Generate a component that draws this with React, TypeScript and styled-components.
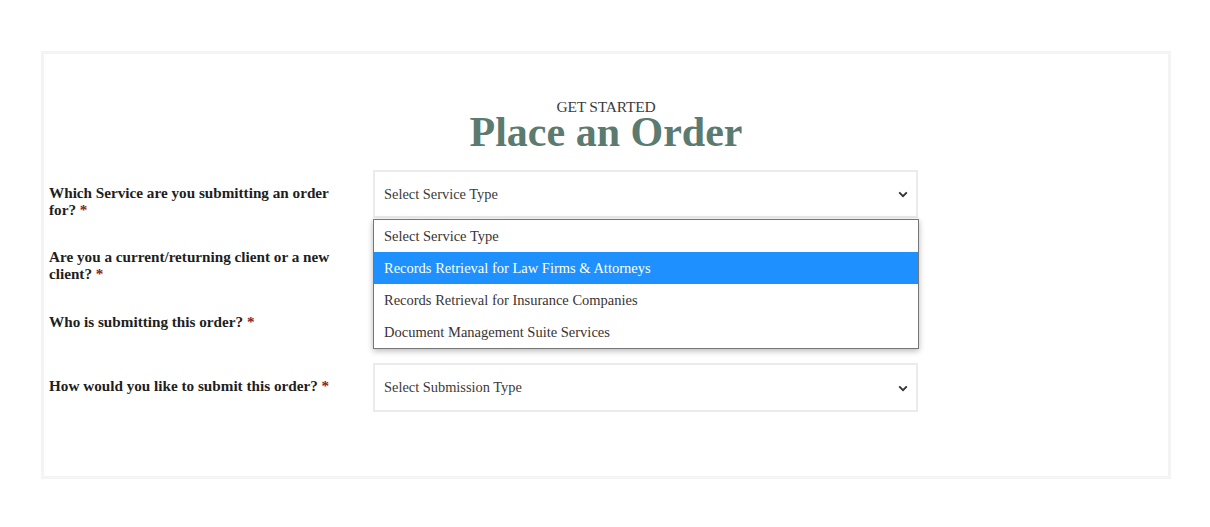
import React from "react";
import styled, { createGlobalStyle } from "styled-components";

const Global = createGlobalStyle`
  html, body { margin: 0; padding: 0; background: #ffffff; }
  body { font-family: "Liberation Serif", "DejaVu Serif", serif; }
`;

const Page = styled.div`
  padding: 51px 40px 0 41px;
`;

const Card = styled.section`
  box-sizing: border-box;
  width: 1130px;
  height: 428px;
  border: 3px solid #f4f4f4;
  padding: 45px 0 0 5px;
`;

const Heading = styled.header`
  display: flex;
  flex-direction: column;
  align-items: center;
  padding-right: 5px;
  margin-bottom: 17px;
`;

const Kicker = styled.div`
  font-family: "Liberation Serif", serif;
  font-size: 15.5px;
  line-height: 16px;
  color: #3c3c3c;
  letter-spacing: -0.2px;
`;

const Title = styled.h1`
  margin: -4px 0 0;
  font-family: "Liberation Serif", serif;
  font-weight: 700;
  font-size: 42px;
  line-height: 42px;
  color: #5b7a70;
`;

const Form = styled.div`
  display: grid;
  grid-template-columns: 300px 545px;
  column-gap: 24px;
  row-gap: 16.4px;
  align-items: start;
`;

const Label = styled.label`
  padding-top: 14px;
  font-family: "Liberation Serif", serif;
  font-weight: 700;
  font-size: 15.2px;
  line-height: 17px;
  color: #1e1e1e;
`;

const Tail = styled.span`
  white-space: nowrap;
`;

const Req = styled.span`
  color: #8a1c1c;
`;

const Field = styled.div`
  position: relative;
`;

const SelectBox = styled.div<{ $tall?: boolean }>`
  box-sizing: border-box;
  height: ${(p) => (p.$tall ? 49 : 48)}px;
  border: 2px solid #ebebeb;
  display: flex;
  align-items: center;
  justify-content: space-between;
  padding: 0 8px 0 9px;
  font-family: "Liberation Serif", serif;
  font-size: 14.4px;
  color: #3a3a3a;
  background: #fff;
`;

const Chevron = styled.svg`
  width: 10px;
  height: 7px;
  margin-top: 1px;
`;

const Menu = styled.ul`
  position: absolute;
  left: 0;
  top: 49px;
  box-sizing: border-box;
  width: 546px;
  margin: 0;
  padding: 0;
  list-style: none;
  background: #fff;
  border: 1px solid #767676;
  box-shadow: 0 2px 6px rgba(0, 0, 0, 0.28);
  z-index: 5;
`;

const Option = styled.li<{ $active?: boolean }>`
  height: 32px;
  line-height: 32px;
  padding-left: 10px;
  font-family: "Liberation Serif", serif;
  font-size: 14.5px;
  color: ${(p) => (p.$active ? "#ffffff" : "#3a3333")};
  background: ${(p) => (p.$active ? "#1e90ff" : "transparent")};
`;

const ChevronIcon = () => (
  <Chevron viewBox="0 0 10 7">
    <path d="M1.2 1.4 L5 5.2 L8.8 1.4" fill="none" stroke="#333" strokeWidth="1.9" />
  </Chevron>
);

const options = [
  "Select Service Type",
  "Records Retrieval for Law Firms & Attorneys",
  "Records Retrieval for Insurance Companies",
  "Document Management Suite Services",
];

export default function App() {
  return (
    <>
      <Global />
      <Page>
        <Card>
          <Heading>
            <Kicker>GET STARTED</Kicker>
            <Title>Place an Order</Title>
          </Heading>
          <Form>
            <Label>
              Which Service are you submitting an order{" "}
              <Tail>
                for? <Req>*</Req>
              </Tail>
            </Label>
            <Field>
              <SelectBox>
                <span>Select Service Type</span>
                <ChevronIcon />
              </SelectBox>
              <Menu>
                {options.map((o, i) => (
                  <Option key={o} $active={i === 1}>
                    {o}
                  </Option>
                ))}
              </Menu>
            </Field>

            <Label>
              Are you a current/returning client or a new{" "}
              <Tail>
                client? <Req>*</Req>
              </Tail>
            </Label>
            <Field>
              <SelectBox aria-label="Client type">
                <span />
                <ChevronIcon />
              </SelectBox>
            </Field>

            <Label>
              Who is submitting this order? <Req>*</Req>
            </Label>
            <Field>
              <SelectBox aria-label="Submitter">
                <span />
                <ChevronIcon />
              </SelectBox>
            </Field>

            <Label>
              How would you like to submit this order? <Req>*</Req>
            </Label>
            <Field>
              <SelectBox $tall>
                <span>Select Submission Type</span>
                <ChevronIcon />
              </SelectBox>
            </Field>
          </Form>
        </Card>
      </Page>
    </>
  );
}
